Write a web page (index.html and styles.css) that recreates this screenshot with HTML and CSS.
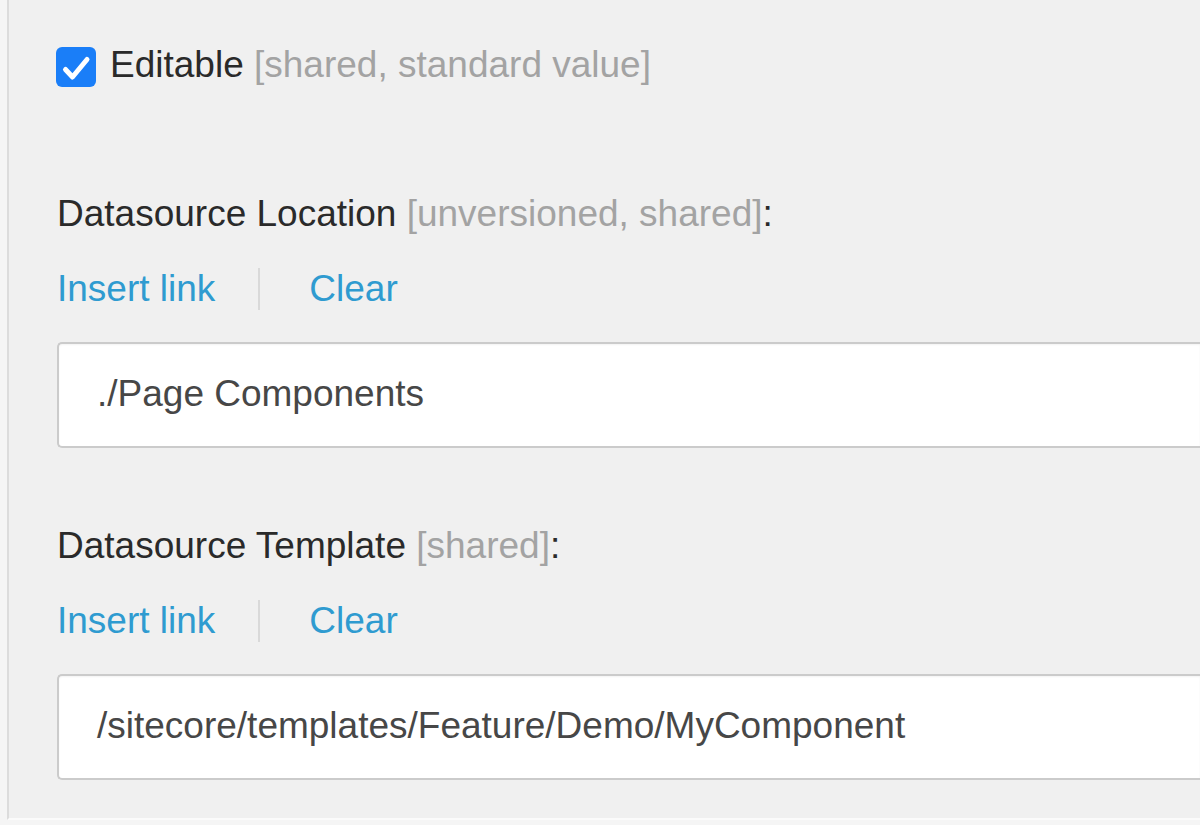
FILE: index.html
```html
<!DOCTYPE html>
<html>
<head>
<meta charset="utf-8">
<link rel="stylesheet" href="styles.css">
</head>
<body>
<div class="panel">
  <div class="check-row">
    <span class="checkbox">
      <svg viewBox="0 0 40 40" width="40" height="40"><path d="M9.5 22.5 L16.5 30 L31 12.5" fill="none" stroke="#fff" stroke-width="5" stroke-linecap="round" stroke-linejoin="round"/></svg>
    </span>
    <span class="check-label">Editable <span class="meta">[shared, standard value]</span></span>
  </div>

  <div class="field">
    <div class="label">Datasource Location <span class="meta">[unversioned, shared]</span>:</div>
    <div class="links">
      <a class="link">Insert link</a>
      <span class="sep"></span>
      <a class="link">Clear</a>
    </div>
    <div class="input">./Page Components</div>
  </div>

  <div class="field">
    <div class="label">Datasource Template <span class="meta">[shared]</span>:</div>
    <div class="links">
      <a class="link">Insert link</a>
      <span class="sep"></span>
      <a class="link">Clear</a>
    </div>
    <div class="input">/sitecore/templates/Feature/Demo/MyComponent</div>
  </div>
</div>
</body>
</html>
```

FILE: styles.css
```css
html, body {
  margin: 0;
  padding: 0;
  overflow: hidden;
}
body {
  background: #f5f5f5;
  font-family: "Liberation Sans", Arial, sans-serif;
  font-size: 37px;
  line-height: 44px;
  color: #2a2a2a;
  width: 1200px;
  height: 825px;
}
.panel {
  box-sizing: border-box;
  margin-left: 7px;
  width: 1193px;
  height: 820px;
  background: #f0f0f0;
  border-left: 2px solid #dcdcdc;
  border-bottom: 2px solid #fbfbfb;
  padding: 43px 0 0 48px;
}
.check-row {
  display: flex;
  align-items: flex-start;
  height: 44px;
}
.checkbox {
  width: 40px;
  height: 40px;
  margin: 4px 14px 0 -1px;
  border-radius: 6px;
  background: #1a7ef8;
  display: block;
  flex: none;
}
.checkbox svg {
  display: block;
}
.meta {
  color: #a3a3a3;
}
.field {
  margin-top: 105px;
}
.field + .field {
  margin-top: 76px;
}
.label {
  height: 44px;
  white-space: nowrap;
}
.links {
  display: flex;
  align-items: center;
  height: 44px;
  margin-top: 31px;
}
.link {
  color: #2f9bd0;
  cursor: pointer;
}
.sep {
  width: 2px;
  height: 42px;
  background: #d9d9d9;
  margin: 0 49px 0 43px;
}
.input {
  box-sizing: border-box;
  margin-top: 31px;
  height: 106px;
  padding: 28px 0 0 38px;
  background: #fff;
  border: 2px solid #cbcbcb;
  border-right: none;
  border-radius: 5px 0 0 5px;
  box-shadow: inset 0 1px 2px rgba(0,0,0,0.05);
  color: #474747;
  white-space: nowrap;
  overflow: hidden;
}
```
